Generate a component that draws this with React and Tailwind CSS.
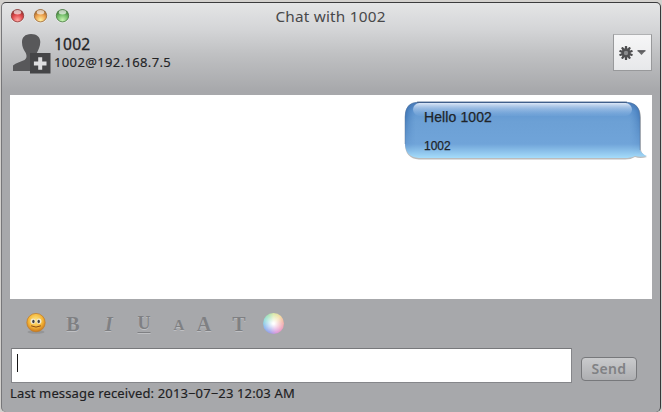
import React from "react";

const lights = [
  { id: "close", edge: "#8d3432", mid: "#e0474a", glow: "#ffa9a4" },
  { id: "minimize", edge: "#9a6530", mid: "#eda04c", glow: "#fff0a0" },
  { id: "zoom", edge: "#44783c", mid: "#72bd68", glow: "#c9f5b4" },
];

function Light({ id, edge, mid, glow }) {
  return (
    <svg width="15" height="16" viewBox="0 0 15 16" className="block shrink-0">
      <defs>
        <radialGradient id={id} cx="50%" cy="85%" r="75%">
          <stop offset="0" stopColor={glow} />
          <stop offset="0.6" stopColor={mid} />
          <stop offset="1" stopColor={edge} />
        </radialGradient>
      </defs>
      <circle cx="7.5" cy="8.4" r="6.9" fill="#f0f0f0" opacity="0.6" />
      <circle cx="7.5" cy="7.7" r="6.2" fill={`url(#${id})`} stroke={edge} strokeWidth="0.8" />
      <ellipse cx="7.5" cy="4.3" rx="3.7" ry="2.2" fill="#fff" opacity="0.65" />
    </svg>
  );
}

function Avatar() {
  return (
    <svg width="38" height="41" viewBox="0 0 38 41" className="block shrink-0">
      <path d="M18 1C12 1 8.800 4.500 9 9.500C9.100 14 10.500 16.500 12.500 19.500C14 22.500 14 25.500 11.500 27C7.500 29 3 30 0 32.500V38h25V20.500h-1.500C25 17.500 27.200 14 27.300 9C27.200 4 24 1 18 1z" fill="#58585a" />
      <rect x="17" y="20" width="20.500" height="20.500" fill="#454547" />
      <path d="M25.200 24.200h4v4.300h4.300v4h-4.300v4.300h-4v-4.300h-4.300v-4h4.300z" fill="#dedee0" />
    </svg>
  );
}

function GearMenu() {
  return (
    <button className="flex h-[37px] w-[39px] items-center gap-[4px] border border-[#98999b] border-t-[#b0b1b3] bg-linear-to-b from-[#f6f6f7] to-[#e7e8ea] pl-[5px]">
      <svg width="14" height="14" viewBox="-7 -7 14 14" className="block">
        {[0, 36, 72, 108, 144].map((a) => (
          <rect key={a} x="-1.150" y="-6.900" width="2.300" height="13.800" rx="0.500" fill="#4c4c4e" transform={`rotate(${a})`} />
        ))}
        <circle r="4.700" fill="#505052" />
        <circle r="2.200" fill="#8b8c8e" />
      </svg>
      <svg width="9" height="6" viewBox="0 0 9 6" className="block">
        <path d="M.5.8h8l-4 4.200z" fill="#6a6a6c" />
        <path d="M.5.8h8" stroke="#444446" />
      </svg>
    </button>
  );
}

function Bubble() {
  return (
    <div className="relative h-[60px] w-[244px]">
      <svg width="244" height="60" viewBox="0 0 244 60" className="absolute inset-0">
        <defs>
          <linearGradient id="body" x1="0" y1="0" x2="0" y2="1">
            <stop offset="0" stopColor="#4475b3" />
            <stop offset="0.16" stopColor="#6298d2" />
            <stop offset="0.35" stopColor="#6ca0d5" />
            <stop offset="0.75" stopColor="#70a4d9" />
            <stop offset="1" stopColor="#a5dcfa" />
          </linearGradient>
          <linearGradient id="sideShade" x1="0" y1="0" x2="1" y2="0">
            <stop offset="0" stopColor="#245ba0" stopOpacity="0.8" />
            <stop offset="0.045" stopColor="#4d85c3" stopOpacity="0" />
            <stop offset="0.955" stopColor="#4d85c3" stopOpacity="0" />
            <stop offset="1" stopColor="#245ba0" stopOpacity="0.7" />
          </linearGradient>
          <linearGradient id="fade" x1="0" y1="0" x2="0" y2="1">
            <stop offset="0" stopColor="#fff" />
            <stop offset="0.4" stopColor="#fff" stopOpacity="0.5" />
            <stop offset="0.9" stopColor="#fff" stopOpacity="0" />
          </linearGradient>
          <mask id="shadeMask">
            <rect width="244" height="60" fill="url(#fade)" />
          </mask>
          <linearGradient id="gloss" x1="0" y1="0" x2="0" y2="1">
            <stop offset="0" stopColor="#e5eefb" stopOpacity="0.95" />
            <stop offset="1" stopColor="#89b4e2" stopOpacity="0.15" />
          </linearGradient>
        </defs>
        <path d="M15 3H222Q237 3 237 18V50Q238 55 243 57Q236 59 231 57Q227 59.500 221 59.500H15Q1 58.500 1 44V18Q1 3 15 3z" fill="#777" opacity="0.5" />
        <path d="M15 2H221Q236 2 236 17V50Q238 54 243 56Q236 57.500 231 56Q227 58 220 58H15Q1 57 1 43V17Q1 2 15 2z" fill="url(#body)" />
        <path d="M15 2H221Q236 2 236 17V58H15Q1 57 1 43V17Q1 2 15 2z" fill="url(#sideShade)" mask="url(#shadeMask)" />
        <rect x="9" y="3" width="219" height="13" rx="6.500" fill="url(#gloss)" />
        <path d="M1 44V17Q1 2 15 2H221Q236 2 236 17V50" fill="none" stroke="#5a7699" strokeOpacity="0.45" />
        <path d="M13 2.200H223" stroke="#3f587f" strokeWidth="1.100" />
      </svg>
      <div className="relative flex flex-col pl-[20px] pt-[9px] font-['Liberation_Sans',sans-serif] text-[#202429]">
        <span className="text-[14px] leading-[16px] tracking-[0.100px] [-webkit-text-stroke:0.250px_#202429]">Hello 1002</span>
        <span className="mt-[14px] text-[12px] leading-[14px] [-webkit-text-stroke:0.250px_#202429]">1002</span>
      </div>
    </div>
  );
}

function Smiley() {
  return (
    <svg width="22" height="24" viewBox="0 0 22 24" className="block">
      <defs>
        <radialGradient id="face" cx="48%" cy="38%" r="62%">
          <stop offset="0" stopColor="#ffe889" />
          <stop offset="0.6" stopColor="#f5b83b" />
          <stop offset="1" stopColor="#cc7719" />
        </radialGradient>
      </defs>
      <ellipse cx="11" cy="20" rx="8.500" ry="1.800" fill="#77787b" opacity="0.4" />
      <circle cx="11" cy="10.600" r="9.200" fill="url(#face)" stroke="#c17b24" strokeWidth="0.700" />
      <ellipse cx="8" cy="9.300" rx="2.400" ry="2.700" fill="#f3ead0" />
      <ellipse cx="14" cy="9.300" rx="2.400" ry="2.700" fill="#f3ead0" />
      <ellipse cx="8.400" cy="9.500" rx="1.200" ry="1.700" fill="#3e4044" />
      <ellipse cx="13.700" cy="9.500" rx="1.200" ry="1.700" fill="#3e4044" />
      <path d="M6.500 14q4.500 2.400 9 0" fill="none" stroke="#8b4b13" strokeWidth="1" strokeLinecap="round" />
    </svg>
  );
}

function Tool({ children, className }) {
  return (
    <span className={`flex h-[20px] items-center justify-center font-['Liberation_Serif',serif] font-bold text-[#7f8083] [text-shadow:0_1px_0_#bfc0c3] ${className}`}>
      {children}
    </span>
  );
}

export default function App() {
  return (
    <div className="h-[412px] w-[662px] overflow-hidden bg-[#d3d1ce] pt-[2px] font-['Noto_Sans',sans-serif]">
      <div className="ml-[1px] flex h-[410px] w-[660px] flex-col rounded-[5px] border-x border-t border-l-[#77777a] border-r-[#38383a] border-t-[#3b3b3d] bg-[#a7a8ab] bg-[linear-gradient(to_bottom,#e4e5e6_0px,#d5d6d8_25px,#bfc0c2_52px,#a7a8ab_88px,#a7a8ab_100%)]">
        <div className="grid h-[26px] grid-cols-[1fr_auto_1fr] items-center">
          <div className="flex gap-[7.500px] pl-[8px]">
            {lights.map((l) => (
              <Light key={l.id} {...l} />
            ))}
          </div>
          <h1 className="mr-[1px] text-[15.300px] leading-[20px] tracking-[0.220px] text-[#48484a]">Chat with 1002</h1>
        </div>
        <div className="flex h-[66px] items-start pl-[11px] pr-[8px] pt-[4px]">
          <Avatar />
          <div className="flex grow flex-col pl-[3px] text-[#242426]">
            <span className="mt-[1px] text-[15.500px] leading-[20px] tracking-[0.200px] [-webkit-text-stroke:0.300px_#242426]">1002</span>
            <span className="text-[13px] leading-[16px] tracking-[0.360px] [-webkit-text-stroke:0.150px_#242426]">1002@192.168.7.5</span>
          </div>
          <div className="pt-[1px]">
            <GearMenu />
          </div>
        </div>
        <div className="ml-[8px] flex h-[204px] w-[642px] shrink-0 justify-end bg-white pr-[4px] pt-[5px]">
          <Bubble />
        </div>
        <div className="flex h-[49px] shrink-0 items-center pl-[23px]">
          <Smiley />
          <Tool className="ml-[16px] w-[20px] text-[20px]">B</Tool>
          <Tool className="ml-[16px] w-[20px] text-[20px] italic">I</Tool>
          <Tool className="ml-[15px] w-[20px] text-[18px] underline decoration-1 underline-offset-[3px]">U</Tool>
          <Tool className="ml-[17px] w-[16px] pt-[3px] text-[15px]">A</Tool>
          <Tool className="ml-[8px] w-[18px] text-[20px]">A</Tool>
          <Tool className="ml-[17px] w-[18px] text-[20px]">T</Tool>
          <span className="ml-[15px] h-[21px] w-[21px] rounded-full bg-[radial-gradient(circle,#fff_5%,#ffffff00_68%),conic-gradient(#d9e8a8,#f2dda0_40deg,#f3b5a8_80deg,#ef9fc0_125deg,#d796dc_165deg,#98a0ea_205deg,#8cbcf0_250deg,#93dcdc_290deg,#a8e2b5_330deg,#d9e8a8)]" />
        </div>
        <div className="flex h-[35px] shrink-0 items-start pl-[9px]">
          <div className="h-[35px] w-[561px] border border-[#85868a] border-t-[#77787b] bg-white pl-[5px] pt-[5px]">
            <div className="h-[18px] w-[1px] bg-[#161616]" />
          </div>
          <button className="ml-[9px] mt-[9px] flex h-[24px] w-[56px] items-center justify-center rounded-[4px] border border-[#77787b] bg-linear-to-b from-[#cacbcd] to-[#adaeb1] text-[14px] font-semibold leading-[18px] tracking-[0.300px] text-[#808184]">Send</button>
        </div>
        <p className="pl-[8px] text-[13px] leading-[20px] tracking-[0.140px] text-[#202022] [-webkit-text-stroke:0.150px_#202022]">Last message received: 2013−07−23 12:03 AM</p>
      </div>
    </div>
  );
}
